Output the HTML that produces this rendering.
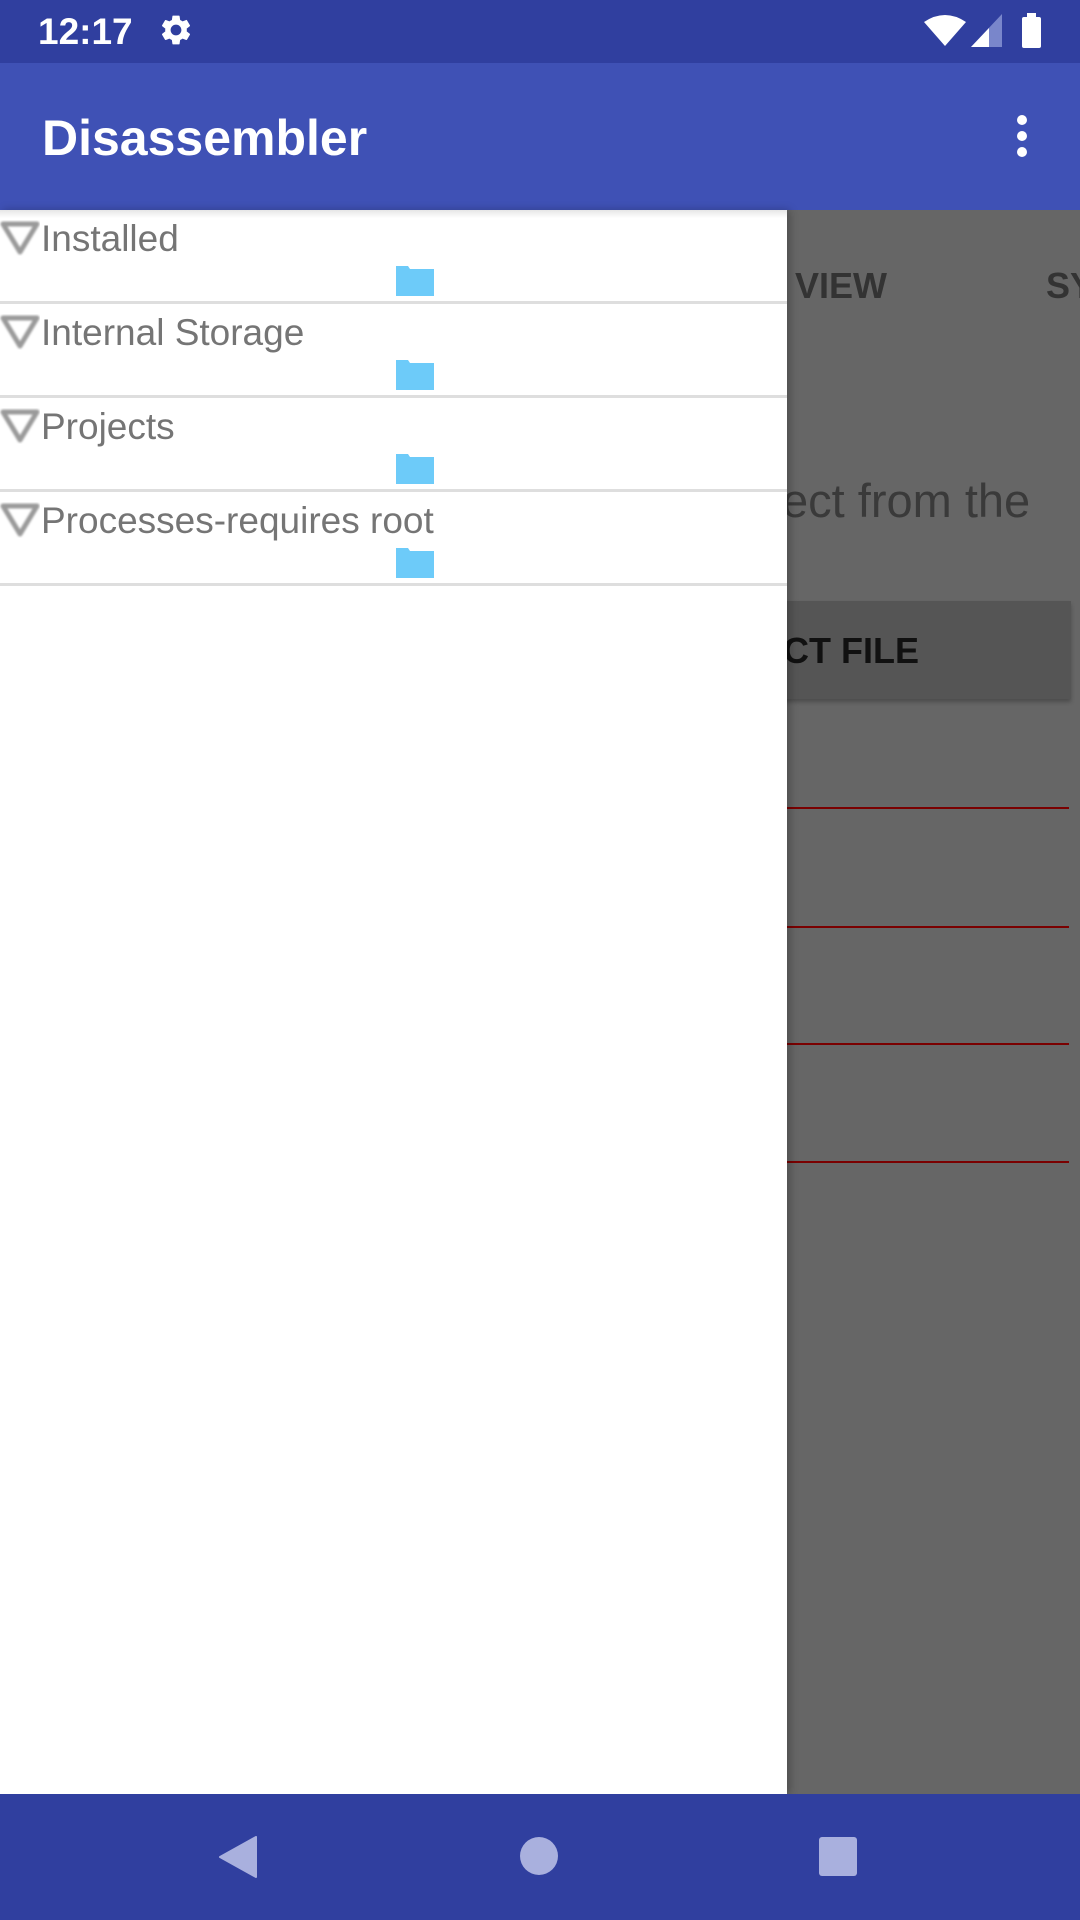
<!DOCTYPE html>
<html><head><meta charset="utf-8">
<style>
*{margin:0;padding:0;box-sizing:border-box}
body{width:1080px;height:1920px;position:relative;overflow:hidden;background:#666;font-family:"Liberation Sans",sans-serif}
.abs{position:absolute}
.row{position:absolute;left:0;width:787px;height:94px;border-bottom:3px solid #dedede}
.row .t{position:absolute;left:41px;top:5px;font-size:37px;color:#757575;line-height:48px;white-space:nowrap}
.row svg.tri{position:absolute;left:0;top:10px}
.row svg.fold{position:absolute;left:396px;top:56px}
.red{position:absolute;left:700px;width:369px;height:2px;background:#7a0000}
</style></head><body>
<div class="abs" style="left:759px;top:265px;font-size:36px;font-weight:bold;color:#333;">K VIEW</div>
<div class="abs" style="left:1046px;top:265px;font-size:36px;font-weight:bold;color:#333;">SY</div>
<div class="abs" style="left:782px;top:473px;font-size:47px;color:#3a3a3a;">ect from the</div>
<div class="abs" style="left:700px;top:601px;width:371px;height:98px;background:#555;box-shadow:0 3px 4px rgba(0,0,0,.25)"></div>
<div class="abs" style="left:759px;top:630px;font-size:36px;font-weight:bold;color:#111;">ECT FILE</div>
<div class="red" style="top:807px"></div>
<div class="red" style="top:926px"></div>
<div class="red" style="top:1043px"></div>
<div class="red" style="top:1161px"></div>

<div class="abs" style="left:0;top:0;width:1080px;height:63px;background:#303f9f"></div>
<div class="abs" style="left:38px;top:11px;font-size:37px;color:#fff;font-weight:bold;">12:17</div>
<svg class="abs" style="left:158px;top:12px" width="36" height="36" viewBox="0 0 24 24"><path fill="#fff" d="M19.14 12.94c.04-.3.06-.61.06-.94 0-.32-.02-.64-.07-.94l2.030-1.580a.49.49 0 00.12-.61l-1.92-3.32a.488.488 0 00-.59-.22l-2.39.96c-.5-.38-1.03-.7-1.62-.94l-.36-2.54a.484.484 0 00-.48-.41h-3.84c-.24 0-.43.17-.47.41l-.36 2.54c-.59.24-1.130.57-1.62.94l-2.39-.96c-.22-.08-.47 0-.59.22L2.74 8.87c-.12.21-.08.47.12.61l2.03 1.58c-.05.3-.09.63-.09.94s.02.64.07.94l-2.03 1.58a.49.49 0 00-.12.61l1.92 3.32c.12.22.37.29.59.22l2.39-.96c.5.38 1.03.7 1.62.94l.36 2.54c.05.24.24.41.48.41h3.84c.24 0 .44-.17.47-.41l.36-2.54c.59-.24 1.13-.56 1.62-.94l2.39.96c.22.08.47 0 .59-.22l1.92-3.32c.12-.22.07-.47-.12-.61l-2.010-1.580zM12 15.6c-1.98 0-3.6-1.62-3.6-3.6s1.62-3.6 3.6-3.6 3.6 1.62 3.6 3.6-1.62 3.6-3.6 3.6z"/></svg>
<svg class="abs" style="left:924px;top:14px" width="42" height="32" viewBox="0 0 42 32"><path fill="#fff" d="M0 8 Q21 -6 42 8 L21 32 Z"/></svg>
<svg class="abs" style="left:971px;top:14px" width="32" height="34" viewBox="0 0 32 34"><path fill="#7986cb" d="M31 0 V33 H0 Z"/><path fill="#fff" d="M18 14 V33 H0 Z"/></svg>
<div class="abs" style="left:1022px;top:17px;width:19px;height:31px;background:#fff;border-radius:2px"></div>
<div class="abs" style="left:1027px;top:13px;width:9px;height:5px;background:#fff"></div>

<div class="abs" style="left:0;top:63px;width:1080px;height:147px;background:#3f51b5"></div>
<div class="abs" style="left:42px;top:109px;font-size:50px;color:#fff;font-weight:bold;">Disassembler</div>
<div class="abs" style="left:1017px;top:115px;width:10px;height:10px;border-radius:50%;background:#fff"></div>
<div class="abs" style="left:1017px;top:131px;width:10px;height:10px;border-radius:50%;background:#fff"></div>
<div class="abs" style="left:1017px;top:147px;width:10px;height:10px;border-radius:50%;background:#fff"></div>

<div class="abs" style="left:0;top:210px;width:787px;height:1584px;background:#fff;box-shadow:3px 0 8px rgba(0,0,0,.25)">
  <div class="abs" style="left:0;top:0;width:787px;height:8px;background:linear-gradient(#e6e6e6,#fff)"></div>
  <div class="row" style="top:0">
    <svg class="tri" width="40" height="36" viewBox="0 0 40 36"><path d="M3 4 H37 L20 32 Z" fill="#fff" stroke="#9a9a9a" stroke-width="5" stroke-linejoin="round" style="filter:blur(1px)"/></svg>
    <div class="t">Installed</div>
    <svg class="fold" width="38" height="30" viewBox="0 0 38 30"><path fill="#6dcbf9" d="M0 0 H12 L14 3 H38 V30 H0 Z"/></svg>
  </div>
  <div class="row" style="top:94px">
    <svg class="tri" width="40" height="36" viewBox="0 0 40 36"><path d="M3 4 H37 L20 32 Z" fill="#fff" stroke="#9a9a9a" stroke-width="5" stroke-linejoin="round" style="filter:blur(1px)"/></svg>
    <div class="t">Internal Storage</div>
    <svg class="fold" width="38" height="30" viewBox="0 0 38 30"><path fill="#6dcbf9" d="M0 0 H12 L14 3 H38 V30 H0 Z"/></svg>
  </div>
  <div class="row" style="top:188px">
    <svg class="tri" width="40" height="36" viewBox="0 0 40 36"><path d="M3 4 H37 L20 32 Z" fill="#fff" stroke="#9a9a9a" stroke-width="5" stroke-linejoin="round" style="filter:blur(1px)"/></svg>
    <div class="t">Projects</div>
    <svg class="fold" width="38" height="30" viewBox="0 0 38 30"><path fill="#6dcbf9" d="M0 0 H12 L14 3 H38 V30 H0 Z"/></svg>
  </div>
  <div class="row" style="top:282px">
    <svg class="tri" width="40" height="36" viewBox="0 0 40 36"><path d="M3 4 H37 L20 32 Z" fill="#fff" stroke="#9a9a9a" stroke-width="5" stroke-linejoin="round" style="filter:blur(1px)"/></svg>
    <div class="t">Processes-requires root</div>
    <svg class="fold" width="38" height="30" viewBox="0 0 38 30"><path fill="#6dcbf9" d="M0 0 H12 L14 3 H38 V30 H0 Z"/></svg>
  </div>
</div>

<div class="abs" style="left:0;top:1794px;width:1080px;height:126px;background:#303f9f"></div>
<svg class="abs" style="left:218px;top:1836px" width="40" height="42" viewBox="0 0 40 42"><path fill="#a9b0de" d="M38 1 V41 L2 21 Z" stroke="#a9b0de" stroke-width="2" stroke-linejoin="round"/></svg>
<div class="abs" style="left:520px;top:1837px;width:38px;height:38px;border-radius:50%;background:#a9b0de"></div>
<div class="abs" style="left:819px;top:1837px;width:38px;height:39px;border-radius:3px;background:#a9b0de"></div>
</body></html>
